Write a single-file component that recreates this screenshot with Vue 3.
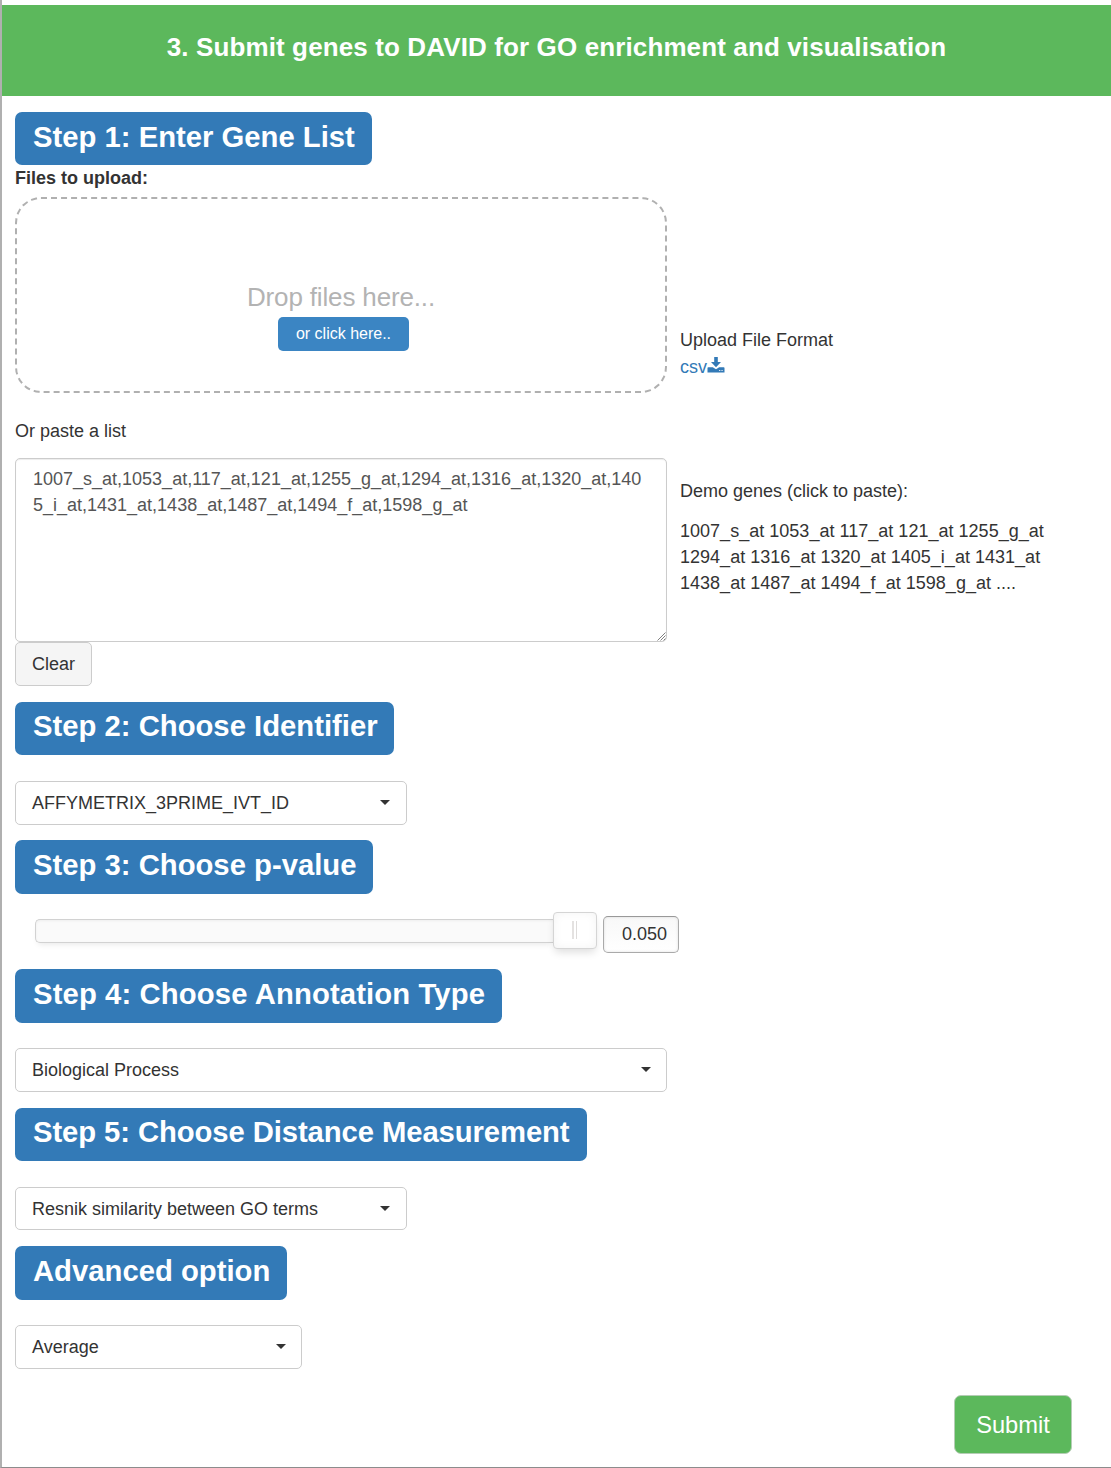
<script setup>
import { ref } from 'vue'

const genes = ref('1007_s_at,1053_at,117_at,121_at,1255_g_at,1294_at,1316_at,1320_at,1405_i_at,1431_at,1438_at,1487_at,1494_f_at,1598_g_at')
const pValue = ref('0.050')
</script>

<template>
  <main class="page">
    <header class="banner">3. Submit genes to DAVID for GO enrichment and visualisation</header>

    <section class="step first">
      <h3 class="label">Step 1: Enter Gene List</h3>
      <div class="upload-title">Files to upload:</div>
      <div class="row upload-row">
        <div class="dropzone">
          <div class="drop-text">Drop files here...</div>
          <button class="browse">or click here..</button>
        </div>
        <div class="format">
          <div>Upload File Format</div>
          <a class="csv">csv<svg width="18" height="18" viewBox="0 0 18 18" fill="currentColor">
            <path d="M7.200 1h3.600v5h3.200L9 11.300 4 6h3.200z" />
            <path d="M.5 12q0-.8.8-.8h4.500L9 13.200l3.200-2h4.500q.8 0 .8.8V16.500H.5zM12.200 14v1.100h1.100V14zm2.300 0v1.100h1.100V14z" fill-rule="evenodd" />
          </svg></a>
        </div>
      </div>
      <div class="paste-title">Or paste a list</div>
      <div class="row">
        <div class="genes-box">
          <textarea v-model="genes" class="genes" spellcheck="false"></textarea>
          <svg class="grip" width="9" height="9" viewBox="0 0 9 9" stroke="#808080" fill="none">
            <path d="M.5 8.500 8.500.5M3.500 8.500l5-5M6.500 8.500l2-2" />
          </svg>
        </div>
        <div class="demo">
          <p>Demo genes (click to paste):</p>
          <p class="demo-list">1007_s_at 1053_at 117_at 121_at 1255_g_at<br>1294_at 1316_at 1320_at 1405_i_at 1431_at<br>1438_at 1487_at 1494_f_at 1598_g_at ....</p>
        </div>
      </div>
      <button class="clear">Clear</button>
    </section>

    <section class="step s2">
      <h3 class="label">Step 2: Choose Identifier</h3>
      <button class="select medium">AFFYMETRIX_3PRIME_IVT_ID<i class="caret"></i></button>
    </section>

    <section class="step s3">
      <h3 class="label">Step 3: Choose p-value</h3>
      <div class="slider-row">
        <div class="track"></div>
        <div class="thumb"><i></i><i></i></div>
        <input v-model="pValue" class="value">
      </div>
    </section>

    <section class="step s4">
      <h3 class="label">Step 4: Choose Annotation Type</h3>
      <button class="select wide">Biological Process<i class="caret"></i></button>
    </section>

    <section class="step s5">
      <h3 class="label">Step 5: Choose Distance Measurement</h3>
      <button class="select medium">Resnik similarity between GO terms<i class="caret"></i></button>
    </section>

    <section class="step s6">
      <h3 class="label">Advanced option</h3>
      <button class="select small">Average<i class="caret"></i></button>
    </section>

    <button class="submit">Submit</button>
  </main>
</template>

<style>
body {
  margin: 0;
  background: #fff;
}
</style>

<style scoped>
* {
  box-sizing: border-box;
}
.page {
  width: 1111px;
  height: 1468px;
  padding-top: 5px;
  border-left: 2px solid #b0b0b0;
  border-bottom: 1px solid #8c8c8c;
  display: flex;
  flex-direction: column;
  overflow: hidden;
  font: 18px/26px "Nimbus Sans", "Liberation Sans", Arial, sans-serif;
  color: #333;
}
button,
input,
textarea {
  font: inherit;
  margin: 0;
}
.banner {
  height: 91px;
  flex: none;
  padding-top: 27px;
  background: #5cb85c;
  color: #fff;
  font-size: 26px;
  line-height: 30px;
  font-weight: bold;
  letter-spacing: .12px;
  text-align: center;
}
.step {
  flex: none;
  padding: 16px 0 0 13px;
  display: flex;
  flex-direction: column;
  align-items: flex-start;
}
.step > * {
  flex: none;
}
.first { height: 590px; }
.s2 { height: 138px; }
.s3 { height: 129px; }
.s4 { height: 139px; }
.s5 { height: 138px; }
.s6 { height: 139px; }
.label {
  width: 357px;
  margin: 0;
  height: 53px;
  padding: 8px 0 0 18px;
  border-radius: 7px;
  background: #337ab7;
  color: #fff;
  font-size: 29.25px;
  line-height: 34px;
  font-weight: bold;
  white-space: nowrap;
}
.s2 .label {
  width: 379px;
  padding-top: 7px;
}
.s3 .label {
  width: 358px;
  height: 54px;
}
.s4 .label {
  width: 487px;
  height: 54px;
  letter-spacing: .12px;
}
.s5 .label {
  width: 572px;
  padding-top: 7px;
  letter-spacing: -.09px;
}
.s6 .label {
  width: 272px;
  height: 54px;
}
.upload-title {
  height: 32px;
  font-weight: bold;
}
.row {
  display: flex;
  gap: 13px;
}
.dropzone {
  width: 652px;
  height: 196px;
  padding-top: 83px;
  border: 2px dashed #b0b0b0;
  border-radius: 26px;
  text-align: center;
}
.drop-text {
  height: 35px;
  color: #b3b3b3;
  font-size: 26px;
  line-height: 30px;
  letter-spacing: -.15px;
}
.browse {
  display: block;
  width: 131px;
  height: 34px;
  margin-left: 261px;
  padding: 0 0 1px;
  border: 0;
  border-radius: 5px;
  background: #3b85c3;
  color: #fff;
  font-size: 16px;
}
.format {
  padding-top: 130px;
}
.csv {
  display: flex;
  align-items: flex-start;
  padding-top: 1px;
  color: #337ab7;
}
.csv svg {
  margin: 2px 0 0 -.5px;
}
.paste-title {
  height: 65px;
  padding-top: 25px;
}
.genes-box {
  position: relative;
  width: 652px;
  height: 184px;
}
.genes {
  display: block;
  width: 100%;
  height: 100%;
  padding: 7px 17px;
  border: 1px solid #ccc;
  border-radius: 5px;
  box-shadow: inset 0 1px 1px rgba(0, 0, 0, .075);
  color: #555;
  word-break: break-all;
  resize: none;
  outline: 0;
}
.grip {
  position: absolute;
  right: 1px;
  bottom: 1px;
}
.demo {
  padding-top: 20px;
  white-space: nowrap;
}
.demo p {
  margin: 0 0 14px;
}
.demo .demo-list {
  letter-spacing: .02px;
}
.clear {
  width: 77px;
  height: 44px;
  padding: 0 0 1px;
  border: 1px solid #ccc;
  border-radius: 5px;
  background: #f5f5f5;
  color: #333;
}
.select {
  height: 44px;
  margin-top: 26px;
  padding: 0 16px 1px 16px;
  display: flex;
  align-items: center;
  justify-content: space-between;
  border: 1px solid #ccc;
  border-radius: 5px;
  background: #fff;
  color: #333;
}
.s4 .select,
.s6 .select {
  margin-top: 25px;
  padding-right: 15px;
}
.s5 .select {
  height: 43px;
  padding-bottom: 0;
}
.medium { width: 392px; }
.wide { width: 652px; }
.small { width: 287px; }
.caret {
  border: 5px solid transparent;
  border-top-color: #333;
  border-bottom: 0;
}
.slider-row {
  display: flex;
  margin: 18px 0 0 20px;
}
.track {
  width: 519px;
  height: 24px;
  margin-top: 7px;
  border: 1px solid #d2d2d2;
  border-right: 0;
  border-radius: 5px 0 0 5px;
  background: #fafafa;
  box-shadow: 0 4px 6px -3px rgba(0, 0, 0, .1), inset 0 1px 3px rgba(0, 0, 0, .05);
}
.thumb {
  width: 44px;
  height: 37px;
  margin-left: -1px;
  padding: 0 1px 1px 0;
  display: flex;
  justify-content: center;
  align-items: center;
  gap: 2px;
  border: 1px solid #d5d5d5;
  border-radius: 4px;
  background: #fff;
  box-shadow: inset 0 0 10px rgba(0, 0, 0, .05), 0 5px 8px -2px rgba(0, 0, 0, .14);
}
.thumb i {
  width: 2px;
  height: 18px;
  background: #e4e2e1;
}
.thumb i + i {
  width: 1px;
  background: #dedcdb;
}
.value {
  width: 76px;
  height: 37px;
  margin: 4px 0 0 6px;
  padding: 0 11px 0 0;
  border: 1px solid #aaa;
  border-top-color: #999;
  border-radius: 5px;
  background: linear-gradient(#f8f8f8, #fff);
  box-shadow: inset 0 0 3px rgba(0, 0, 0, .12);
  color: #333;
  text-align: right;
  outline: 0;
}
.submit {
  width: 118px;
  height: 59px;
  flex: none;
  align-self: flex-end;
  margin: 26px 39px 0 0;
  padding: 0;
  border: 1px solid #b5cdb5;
  border-radius: 7px;
  background: #5cb85c;
  color: #fff;
  font-size: 23.700px;
}
</style>
